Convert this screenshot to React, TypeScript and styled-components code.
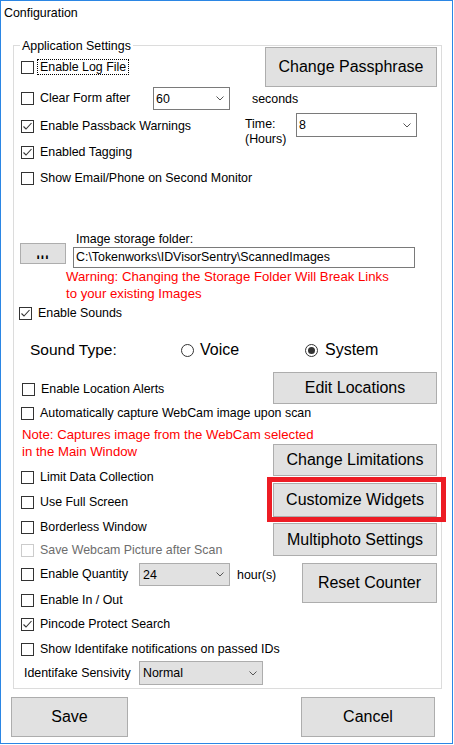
import React from 'react';
import styled, { createGlobalStyle } from 'styled-components';

const GlobalStyle = createGlobalStyle`
  body {
    margin: 0;
    background: #fff;
  }
  * {
    box-sizing: border-box;
  }
`;

const Window = styled.div`
  width: 453px;
  height: 744px;
  border: 1px solid #2b86e4;
  background: #fff;
  font-family: 'Liberation Sans', Arial, sans-serif;
  font-size: 12.4px;
  color: #000;
  display: flex;
  flex-direction: column;
`;

const TitleBar = styled.div`
  height: 44px;
  padding: 5px 3px 0;
  line-height: 15px;
`;

const GroupBox = styled.div`
  position: relative;
  margin-left: 12px;
  width: 429px;
  height: 644px;
  flex: none;
  border: 1px solid #dcdcdc;
`;

const Legend = styled.span`
  position: absolute;
  top: -7px;
  left: 6px;
  padding: 0 2px;
  background: #fff;
  line-height: 15px;
`;

const Row = styled.div<{ $h: number; $mt?: number; $pl?: number; $between?: boolean; $top?: boolean }>`
  display: flex;
  align-items: ${(p) => (p.$top ? 'flex-start' : 'center')};
  justify-content: ${(p) => (p.$between ? 'space-between' : 'flex-start')};
  height: ${(p) => p.$h}px;
  margin-top: ${(p) => p.$mt ?? 0}px;
  padding-left: ${(p) => p.$pl ?? 7}px;
  padding-right: 4px;
  white-space: nowrap;
`;

const CheckLabel = styled.label<{ $w?: number }>`
  display: flex;
  align-items: center;
  align-self: center;
  flex: none;
  width: ${(p) => (p.$w ? `${p.$w}px` : 'auto')};
  white-space: nowrap;
`;

const Box = styled.span<{ $disabled?: boolean; $round?: boolean }>`
  width: 13px;
  height: 13px;
  flex: none;
  display: flex;
  align-items: center;
  justify-content: center;
  border: 1px solid ${(p) => (p.$disabled ? '#cccccc' : '#333333')};
  border-radius: ${(p) => (p.$round ? '50%' : '0')};
  background: #fff;
`;

const Dot = styled.span`
  width: 7px;
  height: 7px;
  border-radius: 50%;
  background: #333;
`;

const CheckText = styled.span<{ $focus?: boolean; $disabled?: boolean; $gap?: number }>`
  margin-left: ${(p) => (p.$focus ? 3 : p.$gap ?? 6)}px;
  line-height: ${(p) => (p.$focus ? 14 : 15)}px;
  padding: ${(p) => (p.$focus ? '0 2px' : '0')};
  border: ${(p) => (p.$focus ? '1px dotted #000' : 'none')};
  color: ${(p) => (p.$disabled ? '#6d6d6d' : '#000')};
`;

const Button = styled.button<{ $w: number; $h: number; $mt?: number; $highlight?: boolean }>`
  position: relative;
  width: ${(p) => p.$w}px;
  height: ${(p) => p.$h}px;
  margin: ${(p) => p.$mt ?? 0}px 0 0;
  flex: none;
  padding: 0;
  border: 1px solid #adadad;
  background: #e1e1e1;
  font-family: 'Liberation Sans', Arial, sans-serif;
  font-size: 16px;
  color: #000;
  &::after {
    content: '';
    display: ${(p) => (p.$highlight ? 'block' : 'none')};
    position: absolute;
    top: -7px;
    left: -7px;
    right: -10px;
    bottom: -6px;
    border: 5px solid #ed1c24;
    pointer-events: none;
  }
`;

const ComboBox = styled.div<{ $w: number; $h: number; $grey?: boolean }>`
  width: ${(p) => p.$w}px;
  height: ${(p) => p.$h}px;
  flex: none;
  display: flex;
  align-items: center;
  justify-content: space-between;
  padding: 0 5px 0 ${(p) => (p.$grey ? 3 : 2)}px;
  border: 1px solid ${(p) => (p.$grey ? '#adadad' : '#7a7a7a')};
  background: ${(p) => (p.$grey ? '#e1e1e1' : '#fff')};
`;

const Unit = styled.span<{ $ml: number }>`
  margin-left: ${(p) => p.$ml}px;
`;

const TimeLabel = styled.div`
  width: 51px;
  margin-top: 4px;
  line-height: 15px;
  flex: none;
`;

const FolderGrid = styled.div`
  display: grid;
  grid-template-columns: 53px 342px;
  grid-template-rows: 15px 21px;
  margin-top: 41px;
  padding-left: 6px;
`;

const FolderLabel = styled.div`
  grid-column: 2;
  grid-row: 1;
  padding-left: 3px;
  line-height: 15px;
`;

const BrowseButton = styled(Button)`
  grid-column: 1;
  grid-row: 1 / 3;
  align-self: end;
  margin-bottom: 4px;
  font-size: 12px;
  font-weight: bold;
`;

const Dots = styled.span`
  display: inline-block;
  letter-spacing: 1px;
  transform: translateY(-3px) scaleY(2);
`;

const PathBox = styled.div`
  grid-column: 2;
  grid-row: 2;
  border: 1px solid #7a7a7a;
  padding-left: 2px;
  line-height: 19px;
  white-space: nowrap;
`;

const Warning = styled.div<{ $ml: number; $mt?: number }>`
  margin-left: ${(p) => p.$ml}px;
  margin-top: ${(p) => p.$mt ?? 0}px;
  color: #ff0000;
  font-size: 13.2px;
  line-height: 17px;
  white-space: nowrap;
`;

const SoundLabel = styled.span`
  width: 151px;
  flex: none;
  font-size: 15.5px;
`;

const RadioOption = styled.label<{ $w?: number }>`
  display: flex;
  align-items: center;
  width: ${(p) => (p.$w ? `${p.$w}px` : 'auto')};
  font-size: 16px;
`;

const RadioText = styled.span<{ $gap: number }>`
  margin-left: ${(p) => p.$gap}px;
`;

const LowerGrid = styled.div`
  display: grid;
  grid-template-columns: minmax(0, 1fr) auto;
  align-items: start;
  margin-top: 9px;
`;

const LeftCol = styled.div`
  display: flex;
  flex-direction: column;
`;

const RightCol = styled.div`
  display: flex;
  flex-direction: column;
  align-items: flex-end;
  padding-right: 4px;
`;

const FieldLabel = styled.span<{ $w: number }>`
  width: ${(p) => p.$w}px;
  flex: none;
`;

const Footer = styled.div`
  display: flex;
  justify-content: space-between;
  margin-top: 8px;
  padding: 0 17px 0 10px;
`;

function CheckMark() {
  return (
    <svg width="11" height="11" viewBox="0 0 11 11">
      <path d="M1.5 5.5 L4 8 L9.5 2" fill="none" stroke="#333" strokeWidth="1.1" />
    </svg>
  );
}

function Chevron() {
  return (
    <svg width="8" height="5" viewBox="0 0 8 5">
      <path d="M0.5 0.5 L4 4 L7.5 0.5" fill="none" stroke="#555" strokeWidth="1" />
    </svg>
  );
}

type TCheckProps = {
  label: string;
  checked?: boolean;
  disabled?: boolean;
  focus?: boolean;
  w?: number;
};

function Check({ label, checked, disabled, focus, w }: TCheckProps) {
  return (
    <CheckLabel $w={w}>
      <Box $disabled={disabled}>{checked && <CheckMark />}</Box>
      <CheckText $focus={focus} $disabled={disabled}>
        {label}
      </CheckText>
    </CheckLabel>
  );
}

type TComboProps = { value: string; w: number; h: number; grey?: boolean };

function Combo({ value, w, h, grey }: TComboProps) {
  return (
    <ComboBox $w={w} $h={h} $grey={grey}>
      <span>{value}</span>
      <Chevron />
    </ComboBox>
  );
}

function App() {
  return (
    <>
      <GlobalStyle />
      <Window>
        <TitleBar>Configuration</TitleBar>
        <GroupBox>
          <Legend>Application Settings</Legend>

          <Row $h={40} $mt={1} $between>
            <Check label="Enable Log File" focus />
            <Button $w={172} $h={40}>
              Change Passphrase
            </Button>
          </Row>
          <Row $h={23}>
            <Check label="Clear Form after" w={132} />
            <Combo value="60" w={77} h={23} />
            <Unit $ml={22}>seconds</Unit>
          </Row>
          <Row $h={26} $mt={3} $top>
            <Check label="Enable Passback Warnings" checked w={224} />
            <TimeLabel>
              Time:
              <br />
              (Hours)
            </TimeLabel>
            <Combo value="8" w={121} h={24} />
          </Row>
          <Row $h={26}>
            <Check label="Enabled Tagging" checked />
          </Row>
          <Row $h={26}>
            <Check label="Show Email/Phone on Second Monitor" />
          </Row>

          <FolderGrid>
            <FolderLabel>Image storage folder:</FolderLabel>
            <BrowseButton $w={46} $h={21}>
              <Dots>...</Dots>
            </BrowseButton>
            <PathBox>C:\Tokenworks\IDVisorSentry\ScannedImages</PathBox>
          </FolderGrid>
          <Warning $ml={52}>
            Warning: Changing the Storage Folder Will Break Links
            <br />
            to your existing Images
          </Warning>

          <Row $h={22} $pl={5}>
            <Check label="Enable Sounds" checked />
          </Row>
          <Row $h={26} $mt={13} $pl={16}>
            <SoundLabel>Sound Type:</SoundLabel>
            <RadioOption $w={124}>
              <Box $round />
              <RadioText $gap={6}>Voice</RadioText>
            </RadioOption>
            <RadioOption>
              <Box $round>
                <Dot />
              </Box>
              <RadioText $gap={7}>System</RadioText>
            </RadioOption>
          </Row>

          <LowerGrid>
            <LeftCol>
              <Row $h={24} $mt={5} $pl={8}>
                <Check label="Enable Location Alerts" />
              </Row>
              <Row $h={24}>
                <Check label="Automatically capture WebCam image upon scan" />
              </Row>
              <Warning $ml={8} $mt={1}>
                Note: Captures image from the WebCam selected
                <br />
                in the Main Window
              </Warning>
              <Row $h={24} $mt={5}>
                <Check label="Limit Data Collection" />
              </Row>
              <Row $h={24} $mt={1}>
                <Check label="Use Full Screen" />
              </Row>
              <Row $h={24} $mt={1}>
                <Check label="Borderless Window" />
              </Row>
              <Row $h={22}>
                <Check label="Save Webcam Picture after Scan" disabled />
              </Row>
              <Row $h={23} $mt={2}>
                <Check label="Enable Quantity" w={118} />
                <Combo value="24" w={91} h={23} grey />
                <Unit $ml={7}>hour(s)</Unit>
              </Row>
              <Row $h={24} $mt={2}>
                <Check label="Enable In / Out" />
              </Row>
              <Row $h={24}>
                <Check label="Pincode Protect Search" checked />
              </Row>
              <Row $h={24} $mt={1}>
                <Check label="Show Identifake notifications on passed IDs" />
              </Row>
              <Row $h={24} $pl={10}>
                <FieldLabel $w={115}>Identifake Sensivity</FieldLabel>
                <Combo value="Normal" w={124} h={24} grey />
              </Row>
            </LeftCol>
            <RightCol>
              <Button $w={164} $h={32}>
                Edit Locations
              </Button>
              <Button $w={164} $h={32} $mt={40}>
                Change Limitations
              </Button>
              <Button $w={164} $h={34} $mt={7} $highlight>
                Customize Widgets
              </Button>
              <Button $w={164} $h={33} $mt={6}>
                Multiphoto Settings
              </Button>
              <Button $w={135} $h={40} $mt={7}>
                Reset Counter
              </Button>
            </RightCol>
          </LowerGrid>
        </GroupBox>
        <Footer>
          <Button $w={117} $h={40}>
            Save
          </Button>
          <Button $w={134} $h={40}>
            Cancel
          </Button>
        </Footer>
      </Window>
    </>
  );
}

export default App;
